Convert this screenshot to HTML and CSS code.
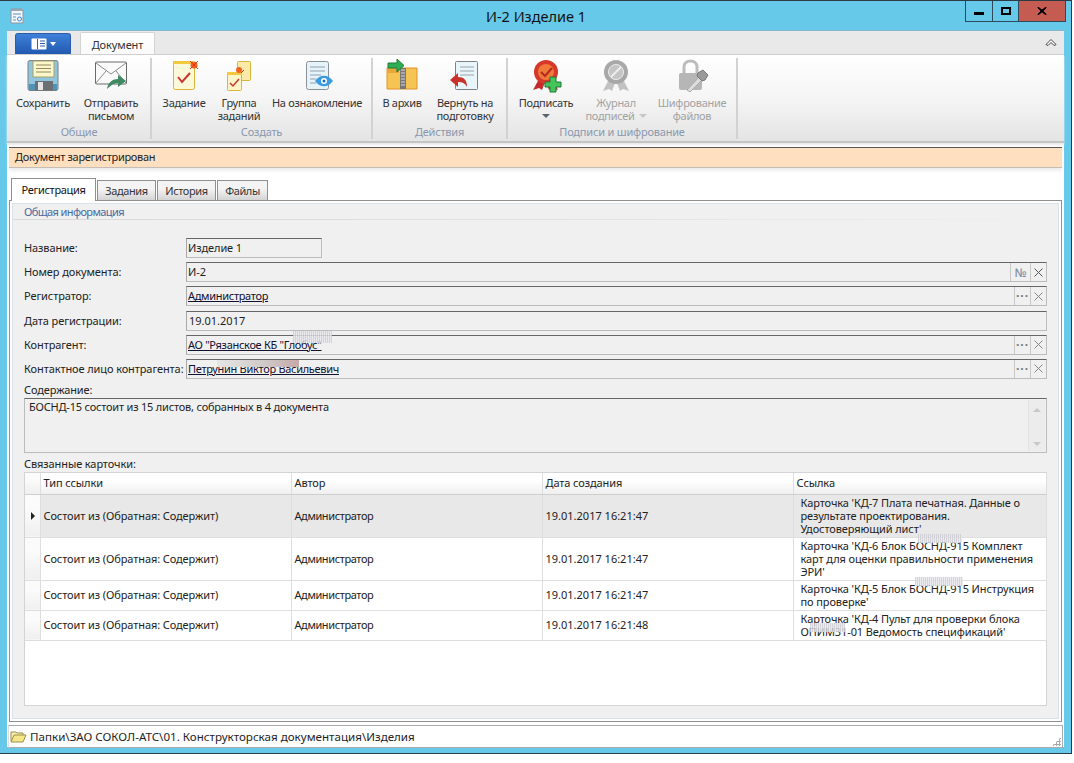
FILE: index.html
```html
<!DOCTYPE html>
<html lang="ru">
<head>
<meta charset="utf-8">
<title>И-2 Изделие 1</title>
<link rel="stylesheet" href="styles.css">
</head>
<body>
<div class="window">
  <header class="titlebar">
    <div class="title-left">
      <svg class="app-icon" width="16" height="16" viewBox="0 0 16 16"><path d="M2 1h11v1h1v13H2z" fill="#f4f8fb" stroke="#8a98a6"/><path d="M2 1h12v2H2z" fill="#9aa7b3"/><path d="M4 6h8M4 9h3M4 12h3" stroke="#5a8fc4"/><circle cx="10.500" cy="11" r="2" fill="none" stroke="#3a7fd0"/></svg>
    </div>
    <div class="title-text">И-2 Изделие 1</div>
    <div class="controls">
      <div class="ctl ctl-min"><span class="glyph-min"></span></div>
      <div class="ctl ctl-max"><span class="glyph-max"></span></div>
      <div class="ctl ctl-close"><svg width="10" height="8" viewBox="0 0 10 8"><path d="M1 0l4 3 4-3 0 1-3 3 3 3 0 1-4-3-4 3 0-1 3-3-3-3z" fill="#000" stroke="#000" stroke-width=".8"/></svg></div>
    </div>
  </header>
  <div class="client">
    <div class="ribbon-tabs">
      <div class="app-btn">
        <svg width="16" height="12" viewBox="0 0 16 12"><rect x=".5" y=".5" width="15" height="11" rx="1" fill="#fff"/><path d="M6.500 1v10" stroke="#2f5fa8"/><path d="M9 3h5M9 5.500h5M9 8h5" stroke="#2f5fa8"/></svg>
        <span class="app-caret"></span>
      </div>
      <div class="ribbon-tab">Документ</div>
      <svg class="collapse" width="12" height="8" viewBox="0 0 12 8"><path d="M1 6.500l5-5 5 5-2 1-3-3-3 3z" fill="#fff" stroke="#444"/></svg>
    </div>
    <div class="ribbon">
      <section class="group g1">
        <div class="buttons">
          <div class="rbtn w70">
            <svg class="ico" width="34" height="34" viewBox="0 0 34 34"><rect x="2" y="1.500" width="30" height="30" rx="2" fill="#8fc6dd" stroke="#7b7f83"/><rect x="3" y="25" width="28" height="6" fill="#4f93b8"/><rect x="7" y="2" width="21" height="16" fill="#fdf6c8" stroke="#a89f70"/><path d="M10 6h15M10 9.500h15M10 13h15" stroke="#8f8a60"/><rect x="9" y="22" width="18" height="9.500" fill="#6d7073"/><rect x="12" y="23" width="5" height="8" fill="#e4e6e8"/></svg>
            <span class="rlabel">Сохранить</span>
          </div>
          <div class="rbtn w66">
            <svg class="ico" width="34" height="34" viewBox="0 0 34 34"><rect x="1.500" y="3" width="31" height="22" rx="1" fill="#fafafa" stroke="#6a6a6a"/><path d="M2 4l15 11L32 4M2 24l10-12M32 24L22 12" fill="none" stroke="#8a8a8a"/><path d="M13 30c1-7 6-10 11-10v-4l8 6-8 6v-4c-4 0-7 2-11 6z" fill="#3f8a63"/></svg>
            <span class="rlabel">Отправить<br>письмом</span>
          </div>
        </div>
        <div class="gcap">Общие</div>
      </section>
      <section class="group g2">
        <div class="buttons">
          <div class="rbtn w64">
            <svg class="ico" width="34" height="34" viewBox="0 0 34 34"><rect x="6.500" y="3.500" width="21" height="27" rx="2" fill="#fdf8d8" stroke="#d9b53a"/><rect x="6" y="2" width="20" height="3" fill="#f3c93f"/><path d="M11 18l4 5 8-9" fill="none" stroke="#c8372d" stroke-width="2"/><circle cx="27" cy="6" r="3.500" fill="#f0641e"/><path d="M23 2l8 8M31 2l-8 8" stroke="#e8341c"/></svg>
            <span class="rlabel">Задание</span>
          </div>
          <div class="rbtn w46">
            <svg class="ico" width="34" height="34" viewBox="0 0 34 34"><rect x="15.500" y="2.500" width="13" height="19" rx="1" fill="#fbe9a8" stroke="#d9b53a"/><rect x="5.500" y="13.500" width="14" height="18" rx="1" fill="#fdf4c8" stroke="#d9b53a"/><rect x="5" y="13" width="15" height="3" fill="#f3c93f"/><path d="M8 24l3 3 6-7" fill="none" stroke="#c8372d" stroke-width="1.500"/><circle cx="17" cy="11" r="3" fill="#f0641e"/><path d="M19 14l3-3" stroke="#c8372d"/></svg>
            <span class="rlabel">Группа<br>заданий</span>
          </div>
          <div class="rbtn w110">
            <svg class="ico" width="34" height="34" viewBox="0 0 34 34"><rect x="6.500" y="2.500" width="22" height="28" rx="2" fill="#e6f4fa" stroke="#8a9098"/><path d="M10 8h15M10 12h15M10 16h11M10 20h6M10 24h6" stroke="#8fa0ae"/><path d="M15 22c5-7 13-7 18 0-5 7-13 7-18 0z" fill="#3a9be0"/><circle cx="24" cy="22" r="3" fill="#fff"/><circle cx="24" cy="22" r="1.500" fill="#1f6fb5"/></svg>
            <span class="rlabel">На ознакомление</span>
          </div>
        </div>
        <div class="gcap">Создать</div>
      </section>
      <section class="group g3">
        <div class="buttons">
          <div class="rbtn w58">
            <svg class="ico" width="34" height="34" viewBox="0 0 34 34"><path d="M2 9h30v21H2z" fill="#f6c452" stroke="#e0932a"/><path d="M2 9h12v5H2z" fill="#e8a73a"/><rect x="15" y="9" width="6" height="21" fill="#777"/><path d="M16 11h4M16 14h4M16 17h4M16 20h4M16 23h4M16 26h4" stroke="#ddd"/><path d="M3 4h9V0l7 6.500-7 6.500V9H3z" fill="#2eae52" stroke="#1c7a36"/></svg>
            <span class="rlabel">В архив</span>
          </div>
          <div class="rbtn w68">
            <svg class="ico" width="34" height="34" viewBox="0 0 34 34"><rect x="7.500" y="2.500" width="22" height="28" rx="1" fill="#e8f5fa" stroke="#7d8288"/><path d="M12 8h14M12 12h14M12 16h14" stroke="#9aa4ac"/><path d="M2 21l8-7v4c6 0 9 3 9 10-2-4-5-5-9-5v5z" fill="#c8322c"/></svg>
            <span class="rlabel">Вернуть на<br>подготовку</span>
          </div>
        </div>
        <div class="gcap">Действия</div>
      </section>
      <section class="group g4">
        <div class="buttons">
          <div class="rbtn w76">
            <svg class="ico" width="34" height="34" viewBox="0 0 34 34"><path d="M10 20L4 31l6-2 3 2 3-8zM24 20l5 11-6-2-3 2-3-8z" fill="#c42a2a"/><circle cx="17" cy="13" r="12" fill="#d8372c"/><circle cx="17" cy="13" r="8" fill="#f07a3a"/><path d="M12 13l4 4 7-8" fill="none" stroke="#b52a20" stroke-width="2"/><path d="M21 18h6v5h5v5h-5v5h-6v-5h-5v-5h5z" fill="#45c45a" stroke="#1c7a36"/></svg>
            <span class="rlabel">Подписать</span>
            <span class="caret"></span>
          </div>
          <div class="rbtn w64 off">
            <svg class="ico" width="34" height="34" viewBox="0 0 34 34"><path d="M10 20L4 32l6-2 3 2 3-8zM24 20l6 12-6-2-3 2-3-8z" fill="#c2c2c2"/><circle cx="17" cy="13" r="12" fill="#a8a8a8"/><circle cx="17" cy="13" r="7.500" fill="#c4c4c4" stroke="#eee"/><path d="M12 18l10-10" stroke="#eee" stroke-width="2"/></svg>
            <span class="rlabel">Журнал<br>подписей<span class="caret caret-inline"></span></span>
          </div>
          <div class="rbtn w88 off">
            <svg class="ico" width="34" height="34" viewBox="0 0 34 34"><path d="M9 15V8c0-8 13-8 13 0v7" fill="none" stroke="#bcbcbc" stroke-width="3"/><rect x="4" y="14" width="23" height="17" rx="2" fill="#b6b6b6"/><path d="M12 31l12-13 3 3-12 12z" fill="#dcdcdc" stroke="#aaa"/><path d="M23 14l5-3 5 5-3 5-3 1-5-5z" fill="#9a9a9a" stroke="#777"/></svg>
            <span class="rlabel">Шифрование<br>файлов</span>
          </div>
        </div>
        <div class="gcap">Подписи и шифрование</div>
      </section>
    </div>
    <div class="notice">Документ зарегистрирован</div>
    <div class="doc-tabs">
      <div class="dtab dtab-on">Регистрация</div>
      <div class="dtab dtab-a">Задания</div>
      <div class="dtab dtab-b">История</div>
      <div class="dtab dtab-c">Файлы</div>
    </div>
    <div class="tab-body">
      <div class="panel">
        <div class="section-head">Общая информация</div>
        <div class="form">
          <div class="row">
            <label class="lbl">Название:</label>
            <div class="field field-short"><span class="val">Изделие 1</span></div>
          </div>
          <div class="row">
            <label class="lbl">Номер документа:</label>
            <div class="field"><span class="val">И-2</span><span class="fbtn fbtn-num">№</span><span class="fbtn fbtn-x"><svg width="9" height="9" viewBox="0 0 9 9"><path d="M.5.500l8 8M8.500.500l-8 8" stroke="#555"/></svg></span></div>
          </div>
          <div class="row">
            <label class="lbl">Регистратор:</label>
            <div class="field"><a class="val link">Администратор</a><span class="fbtn fbtn-dots">...</span><span class="fbtn fbtn-x"><svg width="9" height="9" viewBox="0 0 9 9"><path d="M.5.500l8 8M8.500.500l-8 8" stroke="#888"/></svg></span></div>
          </div>
          <div class="row">
            <label class="lbl">Дата регистрации:</label>
            <div class="field"><span class="val val-date">19.01.2017</span></div>
          </div>
          <div class="row">
            <label class="lbl">Контрагент:</label>
            <div class="field"><a class="val link">АО "Рязанское КБ "Глобус"<span class="blur blur-org"></span></a><span class="fbtn fbtn-dots">...</span><span class="fbtn fbtn-x"><svg width="9" height="9" viewBox="0 0 9 9"><path d="M.5.500l8 8M8.500.500l-8 8" stroke="#888"/></svg></span></div>
          </div>
          <div class="row">
            <label class="lbl">Контактное лицо контрагента:</label>
            <div class="field"><a class="val link">Петрунин Виктор Васильевич<span class="blur blur-person"></span></a><span class="fbtn fbtn-dots">...</span><span class="fbtn fbtn-x"><svg width="9" height="9" viewBox="0 0 9 9"><path d="M.5.500l8 8M8.500.500l-8 8" stroke="#888"/></svg></span></div>
          </div>
          <div class="lbl lbl-block lbl-content">Содержание:</div>
          <div class="memo">
            <div class="memo-text">БОСНД-15 состоит из 15 листов, собранных в 4 документа</div>
            <div class="memo-scroll"><span class="arrow-up"></span><span class="arrow-down"></span></div>
          </div>
          <div class="lbl lbl-block lbl-linked">Связанные карточки:</div>
          <div class="grid-wrap">
            <table class="grid">
              <colgroup><col class="c0"><col class="c1"><col class="c2"><col class="c3"><col class="c4"></colgroup>
              <thead>
                <tr class="hdr"><th class="rh"></th><th>Тип ссылки</th><th>Автор</th><th>Дата создания</th><th>Ссылка</th></tr>
              </thead>
              <tbody>
                <tr class="r3 sel"><td class="rh"><span class="pointer"></span></td><td>Состоит из (Обратная: Содержит)</td><td class="who">Администратор</td><td class="when">19.01.2017 16:21:47</td><td class="linkcell">Карточка 'КД-7 Плата печатная. Данные о результате проектирования. Удостоверяющий лист'</td></tr>
                <tr class="r3"><td class="rh"></td><td>Состоит из (Обратная: Содержит)</td><td class="who">Администратор</td><td class="when">19.01.2017 16:21:47</td><td class="linkcell">Карточка 'КД-6 Блок БОСНД-915 Комплект карт для оценки правильности применения ЭРИ'<span class="blur blur-c6"></span></td></tr>
                <tr class="r2"><td class="rh"></td><td>Состоит из (Обратная: Содержит)</td><td class="who">Администратор</td><td class="when">19.01.2017 16:21:47</td><td class="linkcell">Карточка 'КД-5 Блок БОСНД-915 Инструкция по проверке'<span class="blur blur-c5"></span></td></tr>
                <tr class="r2"><td class="rh"></td><td>Состоит из (Обратная: Содержит)</td><td class="who">Администратор</td><td class="when">19.01.2017 16:21:48</td><td class="linkcell">Карточка 'КД-4 Пульт для проверки блока ОПИМ31-01 Ведомость спецификаций'<span class="blur blur-c4"></span></td></tr>
              </tbody>
            </table>
          </div>
        </div>
      </div>
    </div>
    <footer class="status">
      <svg class="folder" width="17" height="13" viewBox="0 0 17 13"><path d="M1 11V2h5l1 1h6v2" fill="#f7eeb0" stroke="#9a8f4a"/><path d="M1 12l3-7h12l-3 7z" fill="#f5e68c" stroke="#9a8f4a"/></svg>
      <span class="path">Папки\ЗАО СОКОЛ-АТС\01. Конструкторская документация\Изделия</span>
      <span class="grip"></span>
    </footer>
  </div>
</div>
</body>
</html>
```
FILE: styles.css
```css
* { box-sizing: border-box; }
html, body { margin: 0; padding: 0; background: #fff; }
body {
  width: 1074px;
  height: 763px;
  overflow: hidden;
  font-family: "Noto Sans", "Liberation Sans", sans-serif;
  font-size: 11px;
  letter-spacing: -.1px;
  color: #1e1e1e;
}
.window {
  width: 1072px;
  height: 754px;
  background: #66c9ea;
  border-top: 1px solid #2c3a42;
  border-right: 1px solid #2c3a42;
  border-bottom: 1px solid #2c3a42;
  display: flex;
  flex-direction: column;
}
.titlebar {
  height: 29px;
  flex: none;
  display: grid;
  grid-template-columns: 1fr auto 1fr;
}
.title-left { padding: 7px 0 0 9px; }
.app-icon { display: block; }
.title-text { font-size: 14.500px; letter-spacing: 0; line-height: 30px; color: #111; padding-left: 1px; }
.controls { display: flex; justify-content: flex-end; align-items: flex-start; padding-right: 5px; }
.ctl {
  height: 21px;
  border: 1px solid #2c4a5a;
  border-top: 0;
  border-left-width: 1px;
  display: flex;
  align-items: center;
  justify-content: center;
}
.ctl-min { width: 28px; }
.ctl-max { width: 26px; border-left: 0; }
.ctl-close { width: 47px; border-left: 0; background: #c45c52; }
.glyph-min { width: 10px; height: 3px; background: #000; margin-top: 5px; }
.glyph-max { width: 10px; height: 8px; border: 2px solid #000; }
.client {
  margin-left: 7px;
  width: 1057px;
  height: 717px;
  background: #fff;
  display: flex;
  flex-direction: column;
}
.ribbon-tabs {
  height: 24px;
  flex: none;
  background: #e9e9e9;
  border-top: 1px solid #8ab4c8;
  display: flex;
  align-items: flex-end;
  padding-left: 8px;
  position: relative;
}
.app-btn {
  width: 56px;
  height: 21px;
  background: linear-gradient(#3f80d8, #2159b0);
  border: 1px solid #2a5ca8;
  border-bottom: 0;
  border-radius: 3px 3px 0 0;
  display: flex;
  align-items: center;
  justify-content: center;
  gap: 3px;
}
.app-caret { width: 0; height: 0; border: 3px solid transparent; border-top: 4px solid #fff; border-bottom: 0; }
.ribbon-tab {
  margin-left: 9px;
  width: 75px;
  height: 22px;
  background: linear-gradient(#fff, #fafafa);
  border: 1px solid #d4d4d4;
  border-bottom: 0;
  border-radius: 2px 2px 0 0;
  text-align: center;
  line-height: 23px;
  color: #333;
}
.collapse { position: absolute; right: 7px; top: 7px; }
.ribbon {
  height: 89px;
  flex: none;
  display: flex;
  padding-top: 3px;
  background: linear-gradient(#fff 0%, #f5f5f5 50%, #e4e4e4 100%);
  border-top: 1px solid #cfcfcf;
  border-bottom: 2px solid #c4c4c4;
  box-shadow: 0 2px 2px #e8e8e8;
}
.group {
  display: flex;
  flex: none;
  flex-direction: column;
  height: 81px;
  border-right: 2px solid #d2d2d2;
}
.g1 { width: 145px; padding-left: 1px; }
.g2 { width: 221px; }
.g3 { width: 135px; }
.g4 { width: 230px; }
.buttons { display: flex; flex: 1; min-height: 0; }
.rbtn { display: flex; flex-direction: column; align-items: center; color: #333; flex: none; }
.ico { display: block; height: 34px; flex: none; margin-top: 1px; }
.rlabel { margin-top: 3px; line-height: 13px; text-align: center; white-space: nowrap; letter-spacing: -.3px; }
.off { color: #a2a2a2; }
.w46 { width: 46px; } .w58 { width: 58px; } .w64 { width: 64px; } .w66 { width: 66px; }
.w68 { width: 68px; } .w70 { width: 70px; } .w76 { width: 76px; } .w88 { width: 88px; } .w110 { width: 110px; }
.caret { width: 0; height: 0; border: 4px solid transparent; border-top: 4px solid #5a6470; border-bottom: 0; margin-top: 5px; }
.caret-inline { display: inline-block; margin: 0 0 2px 4px; border-top-color: #c8c8c8; }
.gcap { flex: none; text-align: center; color: #8a98ae; line-height: 14px; height: 16px; padding-top: 2px; letter-spacing: -.2px; }
.notice {
  flex: none;
  margin: 4px 2px 0 2px;
  height: 21px;
  background: #fedfc0;
  border-top: 1px solid #555;
  border-bottom: 1px solid #c6bdb4;
  padding-left: 6px;
  line-height: 18px;
  letter-spacing: -.3px;
  color: #222;
  box-shadow: 0 3px 3px #eee;
}
.doc-tabs {
  flex: none;
  display: flex;
  align-items: flex-end;
  height: 32px;
  padding-left: 4px;
  gap: 1px;
}
.dtab {
  height: 20px;
  background: linear-gradient(#f4f4f4 40%, #d4d4d4);
  border: 1px solid #8f8f8f;
  border-bottom: 0;
  text-align: center;
  line-height: 19px;
  letter-spacing: -.4px;
  color: #333;
}
.dtab-on { height: 23px; width: 85px; background: #fff; line-height: 22px; color: #111; position: relative; top: 1px; letter-spacing: -.3px; }
.dtab-a { width: 59px; }
.dtab-b { width: 59px; }
.dtab-c { width: 51px; }
.tab-body {
  flex: none;
  margin-left: 2px;
  width: 1053px;
  height: 522px;
  border: 1px solid #8f8f8f;
  padding: 2px;
}
.panel {
  height: 100%;
  background: #f0f0f0;
  border: 1px solid #dbe1ea;
}
.section-head {
  height: 16px;
  padding-left: 11px;
  line-height: 16px;
  color: #4a6a9e;
  letter-spacing: -.6px;
  background: linear-gradient(90deg, #d8d8d8, #e4e4e4 60%, #f0f0f0) left bottom / 100% 1px no-repeat;
}
.form { padding: 18px 11px 0 11px; }
.row { display: flex; height: 20px; margin-bottom: 4.200px; }
.lbl { width: 162px; flex: none; line-height: 20px; color: #222; white-space: nowrap; }
.lbl-block { width: auto; line-height: 14px; }
.lbl-content { margin-top: 0; margin-bottom: 1px; }
.lbl-linked { margin-top: 4px; margin-bottom: 1px; }
.field {
  flex: 1;
  display: flex;
  align-items: stretch;
  background: #f0f0f0;
  border: 1px solid #bcbcbc;
  border-top-color: #666;
  border-left-color: #a8a8a8;
}
.field-short { flex: none; width: 136px; }
.val { flex: 1; padding-left: 1px; line-height: 18px; color: #1e1e1e; position: relative; }
.val-date { padding-left: 2px; letter-spacing: 0; }
.link { flex: none; margin-right: auto; text-decoration: underline; color: #101030; letter-spacing: -.3px; }
.fbtn {
  flex: none;
  width: 16px;
  border-left: 1px solid #c8c8c8;
  display: flex;
  align-items: center;
  justify-content: center;
  color: #777;
}
.fbtn-num { width: 20px; color: #7d8fa8; font-size: 12px; font-weight: 500; }
.fbtn-dots { font-weight: 700; font-size: 12px; letter-spacing: 1px; line-height: 8px; padding-bottom: 6px; }
.fbtn-x { width: 16px; }
.blur {
  position: absolute;
  background: repeating-linear-gradient(90deg, rgba(205,205,212,.85) 0 1px, rgba(232,232,236,.85) 1px 2px);
}
.blur-org { left: 106px; top: -5px; width: 39px; height: 12px; }
.blur-person { left: 30px; top: 0; width: 82px; height: 7px; background: linear-gradient(90deg, #e6e6e6, #cfc8c8 60%, #c8a8a8); }
.memo {
  height: 55px;
  display: flex;
  border: 1px solid #bcbcbc;
  border-top: 1px solid #666;
  background: #f0f0f0;
}
.memo-text { flex: 1; padding: 1px 0 0 4px; line-height: 14px; letter-spacing: -.2px; }
.memo-scroll {
  width: 17px;
  margin: 1px;
  background: #ececec;
  border-left: 1px solid #e2e2e2;
  display: flex;
  flex-direction: column;
  justify-content: space-between;
  align-items: center;
  padding: 8px 0 5px;
}
.arrow-up { width: 0; height: 0; border: 4px solid transparent; border-bottom: 4px solid #c8c8c8; border-top: 0; }
.arrow-down { width: 0; height: 0; border: 4px solid transparent; border-top: 4px solid #c8c8c8; border-bottom: 0; }
.grid-wrap {
  height: 234px;
  background: #fff;
  border: 1px solid #d4d4d4;
}
.grid { width: 1021px; border-collapse: collapse; table-layout: fixed; }
.c0 { width: 15px; } .c1 { width: 251px; } .c2 { width: 251px; } .c3 { width: 251px; } .c4 { width: 253px; }
.grid th, .grid td {
  padding: 0 0 0 3px;
  font-weight: 400;
  text-align: left;
  color: #222;
  border: 1px solid #dedede;
  border-top: 0;
  vertical-align: middle;
  line-height: 13px;
  position: relative;
}
.grid tr > :first-child { border-left: 0; }
.grid tr > :last-child { border-right: 1px solid #dedede; }
.hdr { height: 21px; }
.hdr th { background: linear-gradient(#fff 35%, #efefef); border-bottom-color: #cfcfcf; padding-bottom: 1px; }
.r3 { height: 43px; }
.r2 { height: 30px; }
.grid .r2 td { padding-bottom: 1px; }
.sel td { background: #e8e8e8; }
.grid td.who { letter-spacing: -.4px; }
.grid td.when { letter-spacing: 0; }
.grid td.rh, .grid th.rh { padding: 0; background: linear-gradient(#fbfbfb 30%, #efefef); }
.pointer { display: block; margin-left: 6px; width: 0; height: 0; border: 4px solid transparent; border-left: 4px solid #222; border-right: 0; }
.grid td.linkcell { padding: 0 4px 0 7px; }
.grid .r2 td.linkcell { padding-bottom: 1px; }
.blur-c6 { left: 124px; top: -4px; width: 44px; height: 9px; }
.blur-c5 { left: 121px; top: -4px; width: 48px; height: 9px; }
.blur-c4 { left: 16px; top: 12px; width: 35px; height: 9px; }
.status {
  flex: none;
  margin: 3px 1px 0 1px;
  height: 23px;
  display: flex;
  align-items: center;
  gap: 3px;
  background: #fff;
  border: 1px solid #aaa;
  border-left-color: #ddd;
  border-top-width: 1px;
  position: relative;
  color: #1e1e1e;
  font-size: 11.600px;
  letter-spacing: 0;
}
.folder { flex: none; margin-left: 1px; }
.grip {
  position: absolute;
  right: 1px;
  bottom: 1px;
  width: 9px;
  height: 9px;
  background: radial-gradient(circle, #aaa 50%, transparent 55%) 0 0 / 3px 3px;
  clip-path: polygon(100% 0, 100% 100%, 0 100%);
}
```
